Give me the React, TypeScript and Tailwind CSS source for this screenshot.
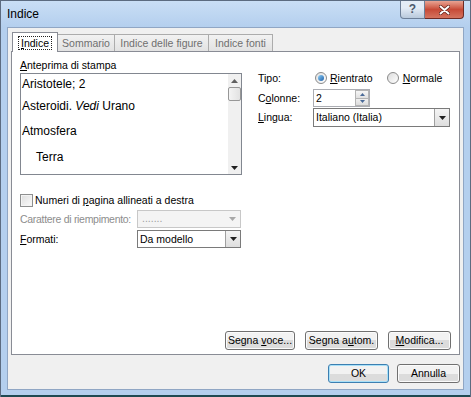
import React from "react";

const U = ({ children }: { children: React.ReactNode }) => (
  <span className="underline underline-offset-[1px]">{children}</span>
);

const Arrow = ({ disabled }: { disabled?: boolean }) => (
  <svg width="7" height="4" viewBox="0 0 7 4">
    <path d="M0 0 L7 0 L3.5 4 Z" fill={disabled ? "#a8a8a8" : "#202020"} />
  </svg>
);

const Btn = ({
  children,
  w,
  def,
}: {
  children: React.ReactNode;
  w: string;
  def?: boolean;
}) => (
  <div
    className={`${w} h-[19px] flex items-center justify-center rounded-[3px] border ${
      def ? "border-[#3c7fb1] shadow-[inset_0_0_0_1px_#a8e0f8]" : "border-[#707070] shadow-[inset_0_0_0_1px_#fbfbfb]"
    } bg-gradient-to-b from-[#f2f2f2] from-50% to-[#dcdcdc] to-50% text-black`}
  >
    <span className="whitespace-pre">{children}</span>
  </div>
);

const Tab = ({ children, w }: { children: React.ReactNode; w: string }) => (
  <div
    className={`${w} h-[17px] border border-b-0 border-l-0 border-[#acacac] bg-gradient-to-b from-[#f2f2f2] to-[#e2e2e2] text-[#6f6f6f] flex items-center justify-center`}
  >
    {children}
  </div>
);

export default function App() {
  return (
    <div
      className="w-[471px] h-[397px] flex flex-col bg-[#b4cfee] border border-b-0 border-[#5c6b80] overflow-hidden text-[10.5px] leading-[13px] text-black"
      style={{ fontFamily: '"Liberation Sans", Arial, sans-serif' }}
    >
      {/* Title bar */}
      <div className="h-[26px] flex items-start bg-gradient-to-b from-[#c9def5] to-[#b4cfee] shrink-0">
        <div className="pl-[6px] pt-[6px] text-[12px] leading-[14px] text-black">Indice</div>
        <div className="ml-auto flex mr-[6px]">
          <div className="w-[25px] h-[18px] flex items-center justify-center rounded-bl-[4px] border border-t-0 border-[#6d7f98] bg-gradient-to-b from-[#e4ecf6] from-40% to-[#b9c9dc] text-[#4d5a6c] text-[12px] font-bold">
            ?
          </div>
          <div className="w-[39px] h-[18px] flex items-center justify-center rounded-br-[4px] border border-t-0 border-l-0 border-[#6e2a24] bg-gradient-to-b from-[#e8a393] from-0% via-[#c74a37] via-50% to-[#d4735f]">
            <svg width="11" height="10" viewBox="0 0 11 10">
              <path d="M1.5 1.5 L9.5 8.5 M9.5 1.5 L1.5 8.5" stroke="#5a1d16" strokeWidth="3.4" strokeLinecap="round" />
              <path d="M1.5 1.5 L9.5 8.5 M9.5 1.5 L1.5 8.5" stroke="#fff" strokeWidth="2" strokeLinecap="round" />
            </svg>
          </div>
        </div>
      </div>

      {/* Client area */}
      <div className="h-[363px] mx-[6px] border border-[#90a6c4] bg-[#f0f0f0] flex flex-col px-[3px] pt-[4px] pb-[6px] shrink-0">
        {/* tabs */}
        <div className="flex items-end h-[19px] pl-[1px] relative z-10">
          <div className="w-[46px] h-[20px] border border-b-0 border-[#898c95] bg-white flex items-center justify-center -mb-[1px]">
            <span className="outline-1 outline-dotted outline-[#222] px-[2px] leading-[12px]">
              <U>I</U>ndice
            </span>
          </div>
          <Tab w="w-[57px]">Sommario</Tab>
          <Tab w="w-[94px]">Indice delle figure</Tab>
          <Tab w="w-[64px]">Indice fonti</Tab>
        </div>

        {/* tab panel */}
        <div className="h-[304px] border border-[#898c95] bg-white flex flex-col px-[8px] pb-[4px]">
          <div className="flex">
            {/* left column */}
            <div className="flex flex-col pt-[7px]">
              <div>
                <U>A</U>nteprima di stampa
              </div>
              <div className="mt-[1px] w-[222px] h-[102px] border border-[#828790] bg-white flex">
                <div className="flex-1 pl-[1px] text-[12px] leading-[16px]">
                  <div className="mt-[2px]">Aristotele; 2</div>
                  <div className="mt-[6px]">
                    Asteroidi. <i>Vedi</i> Urano
                  </div>
                  <div className="mt-[9px]">Atmosfera</div>
                  <div className="mt-[10px] pl-[14px]">Terra</div>
                </div>
                <div className="w-[13px] bg-[#f0f0f0] flex flex-col items-center">
                  <div className="h-[13px] flex items-center justify-center">
                    <svg width="7" height="4" viewBox="0 0 7 4">
                      <path d="M0 4 L7 4 L3.5 0 Z" fill="#606060" />
                    </svg>
                  </div>
                  <div className="w-[13px] h-[14px] border border-[#979797] rounded-[2px] bg-gradient-to-r from-[#f4f4f4] to-[#e2e2e2]" />
                  <div className="flex-1" />
                  <div className="h-[13px] flex items-center justify-center">
                    <Arrow />
                  </div>
                </div>
              </div>
            </div>

            {/* right column */}
            <div className="ml-[16px] pt-[18px] flex flex-col">
              <div className="flex items-center h-[16px]">
                <div className="w-[57px]">Tipo:</div>
                <div className="flex items-center">
                  <div className="w-[12px] h-[12px] rounded-full border border-[#8a8a8a] bg-gradient-to-br from-[#e0e0e0] to-[#ffffff] flex items-center justify-center">
                    <div className="w-[6px] h-[6px] rounded-full bg-gradient-to-br from-[#8fd0f7] to-[#1c5fa8]" />
                  </div>
                  <span className="ml-[3px]">
                    <U>R</U>ientrato
                  </span>
                </div>
                <div className="flex items-center ml-[14px]">
                  <div className="w-[12px] h-[12px] rounded-full border border-[#8a8a8a] bg-gradient-to-br from-[#dcdcdc] to-[#ffffff]" />
                  <span className="ml-[4px]">
                    <U>N</U>ormale
                  </span>
                </div>
              </div>
              <div className="flex items-center h-[18px] mt-[3px]">
                <div className="w-[55px]">
                  C<U>o</U>lonne:
                </div>
                <div className="w-[57px] h-[18px] border border-[#abadb3] bg-white flex">
                  <div className="flex-1 pl-[2px] leading-[16px]">2</div>
                  <div className="w-[14px] flex flex-col">
                    <div className="flex-1 border border-[#b4b4b4] bg-gradient-to-b from-[#f6f6f6] to-[#e0e0e0] flex items-center justify-center">
                      <svg width="5" height="3" viewBox="0 0 5 3">
                        <path d="M0 3 L5 3 L2.5 0 Z" fill="#4a6a98" />
                      </svg>
                    </div>
                    <div className="flex-1 border border-t-0 border-[#b4b4b4] bg-gradient-to-b from-[#f0f0f0] to-[#dcdcdc] flex items-center justify-center">
                      <svg width="5" height="3" viewBox="0 0 5 3">
                        <path d="M0 0 L5 0 L2.5 3 Z" fill="#4a6a98" />
                      </svg>
                    </div>
                  </div>
                </div>
              </div>
              <div className="flex items-center h-[19px] mt-[1px]">
                <div className="w-[55px]">
                  <U>L</U>ingua:
                </div>
                <div className="w-[137px] h-[19px] border border-[#7a7a7a] bg-white flex">
                  <div className="flex-1 pl-[2px] leading-[17px]">Italiano (Italia)</div>
                  <div className="w-[15px] border-l border-[#a0a0a0] bg-gradient-to-b from-[#f4f4f4] to-[#dedede] flex items-center justify-center">
                    <Arrow />
                  </div>
                </div>
              </div>
            </div>
          </div>

          {/* checkbox */}
          <div className="flex items-center mt-[19px] h-[13px]">
            <div className="w-[13px] h-[13px] border border-[#8e8f8f] bg-gradient-to-br from-[#dedede] to-[#fbfbfb] shadow-[inset_0_0_0_1px_#f4f4f4]" />
            <span className="ml-[2px]">
              Numeri di <U>p</U>agina allineati a destra
            </span>
          </div>
          <div className="flex items-center mt-[3px] h-[18px]">
            <div className="w-[117px] whitespace-nowrap tracking-[-0.3px] text-[#8d8d8d]">Carattere di riempimento:</div>
            <div className="w-[104px] h-[18px] border border-[#c8c8c8] bg-[#f4f4f4] flex">
              <div className="flex-1 pl-[4px] leading-[14px] text-[#a0a0a0]">.......</div>
              <div className="w-[15px] flex items-center justify-center">
                <Arrow disabled />
              </div>
            </div>
          </div>
          <div className="flex items-center mt-[2px] h-[18px]">
            <div className="w-[117px]">
              <U>F</U>ormati:
            </div>
            <div className="w-[104px] h-[18px] border border-[#7a7a7a] bg-white flex">
              <div className="flex-1 pl-[2px] leading-[16px]">Da modello</div>
              <div className="w-[15px] border-l border-[#a0a0a0] bg-gradient-to-b from-[#f4f4f4] to-[#dedede] flex items-center justify-center">
                <Arrow />
              </div>
            </div>
          </div>

          <div className="flex-1" />
          <div className="flex justify-end gap-[10px]">
            <Btn w="w-[70px]">
              <span>Segna </span>
              <U>v</U>
              <span>oce...</span>
            </Btn>
            <Btn w="w-[73px]">
              <span>Segna a</span>
              <U>u</U>
              <span>tom.</span>
            </Btn>
            <Btn w="w-[63px]">
              <U>M</U>
              <span>odifica...</span>
            </Btn>
          </div>
        </div>

        <div className="flex-1" />
        <div className="flex justify-end gap-[8px]">
          <Btn w="w-[61px]" def>
            OK
          </Btn>
          <Btn w="w-[63px]">Annulla</Btn>
        </div>
      </div>
      <div className="flex-1" />
      <div className="h-[2px] bg-[#1f4a52] shrink-0 -mx-[1px]" />
    </div>
  );
}
